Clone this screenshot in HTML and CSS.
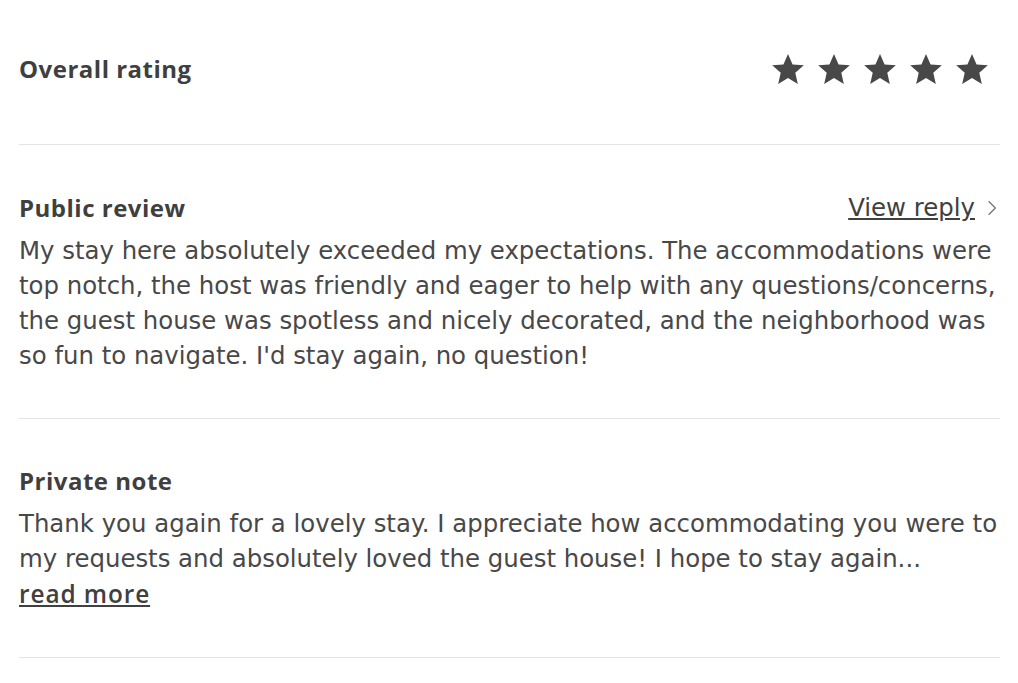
FILE: index.html
```html
<!DOCTYPE html>
<html lang="en">
<head>
  <meta charset="UTF-8">
  <title>Review</title>
  <link rel="stylesheet" href="styles.css">
</head>
<body>
  <div class="review">

    <!-- RATING -->
    <div class="section rating">
      <h3>Overall rating</h3>
      <div class="stars">
        <svg viewBox="0 0 24 24"><path d="M12 2.5l2.9 6.6 7.1.6-5.4 4.7 1.6 7-6.2-3.7-6.2 3.7 1.6-7L2 9.7l7.1-.6z"/></svg>
        <svg viewBox="0 0 24 24"><path d="M12 2.5l2.9 6.6 7.1.6-5.4 4.7 1.6 7-6.2-3.7-6.2 3.7 1.6-7L2 9.7l7.1-.6z"/></svg>
        <svg viewBox="0 0 24 24"><path d="M12 2.5l2.9 6.6 7.1.6-5.4 4.7 1.6 7-6.2-3.7-6.2 3.7 1.6-7L2 9.7l7.1-.6z"/></svg>
        <svg viewBox="0 0 24 24"><path d="M12 2.5l2.9 6.6 7.1.6-5.4 4.7 1.6 7-6.2-3.7-6.2 3.7 1.6-7L2 9.7l7.1-.6z"/></svg>
        <svg viewBox="0 0 24 24"><path d="M12 2.5l2.9 6.6 7.1.6-5.4 4.7 1.6 7-6.2-3.7-6.2 3.7 1.6-7L2 9.7l7.1-.6z"/></svg>
      </div>
    </div>

    <!-- PUBLIC REVIEW -->
    <div class="section">
      <div class="head">
        <h3>Public review</h3>
        <a href="#" class="reply">View reply</a>
        <svg class="chevron" viewBox="0 0 12 20"><path d="M2 2l8 8-8 8"/></svg>
      </div>
      <p>My stay here absolutely exceeded my expectations. The accommodations were top notch, the host was friendly and eager to help with any questions/concerns, the guest house was spotless and nicely decorated, and the neighborhood was so fun to navigate. I'd stay again, no question!</p>
    </div>

    <!-- PRIVATE NOTE -->
    <div class="section">
      <div class="head">
        <h3>Private note</h3>
      </div>
      <p>Thank you again for a lovely stay. I appreciate how accommodating you were to my requests and absolutely loved the guest house! I hope to stay again...<br><a href="#" class="more">read more</a></p>
    </div>

  </div>
</body>
</html>
```

FILE: styles.css
```css
body {
  margin: 0;
  font-family: "DejaVu Sans", sans-serif;
  color: #484848;
  background-color: white;
}

.review {
  padding: 0 18px 0 19px;
}

.section {
  padding: 48px 0 45px;
  border-bottom: 1px solid #e4e4e4;
}

h3 {
  margin: 0;
  font-family: "Open Sans", sans-serif;
  font-size: 24px;
  line-height: 28px;
  font-weight: bold;
  letter-spacing: 0.5px;
  color: #3f3f3f;
}

.rating {
  display: flex;
  justify-content: space-between;
  align-items: center;
  padding: 50px 9px 56px 0;
}

.stars {
  display: flex;
  gap: 8px;
}

.stars svg {
  width: 38px;
  height: 38px;
  fill: #484848;
}

.head {
  display: flex;
  align-items: center;
  margin-bottom: 11px;
}

.head h3 {
  flex: 1;
}

.reply {
  font-size: 24.4px;
  color: #404040;
  text-decoration: underline;
}

.chevron {
  width: 10px;
  height: 18px;
  margin: 0 3px 0 12px;
  fill: none;
  stroke: #777;
  stroke-width: 1.6;
}

p {
  margin: 0;
  font-size: 24.4px;
  line-height: 35px;
}

.more {
  font-family: "Open Sans", sans-serif;
  font-weight: 600;
  letter-spacing: 0.9px;
  color: #404040;
}
```
